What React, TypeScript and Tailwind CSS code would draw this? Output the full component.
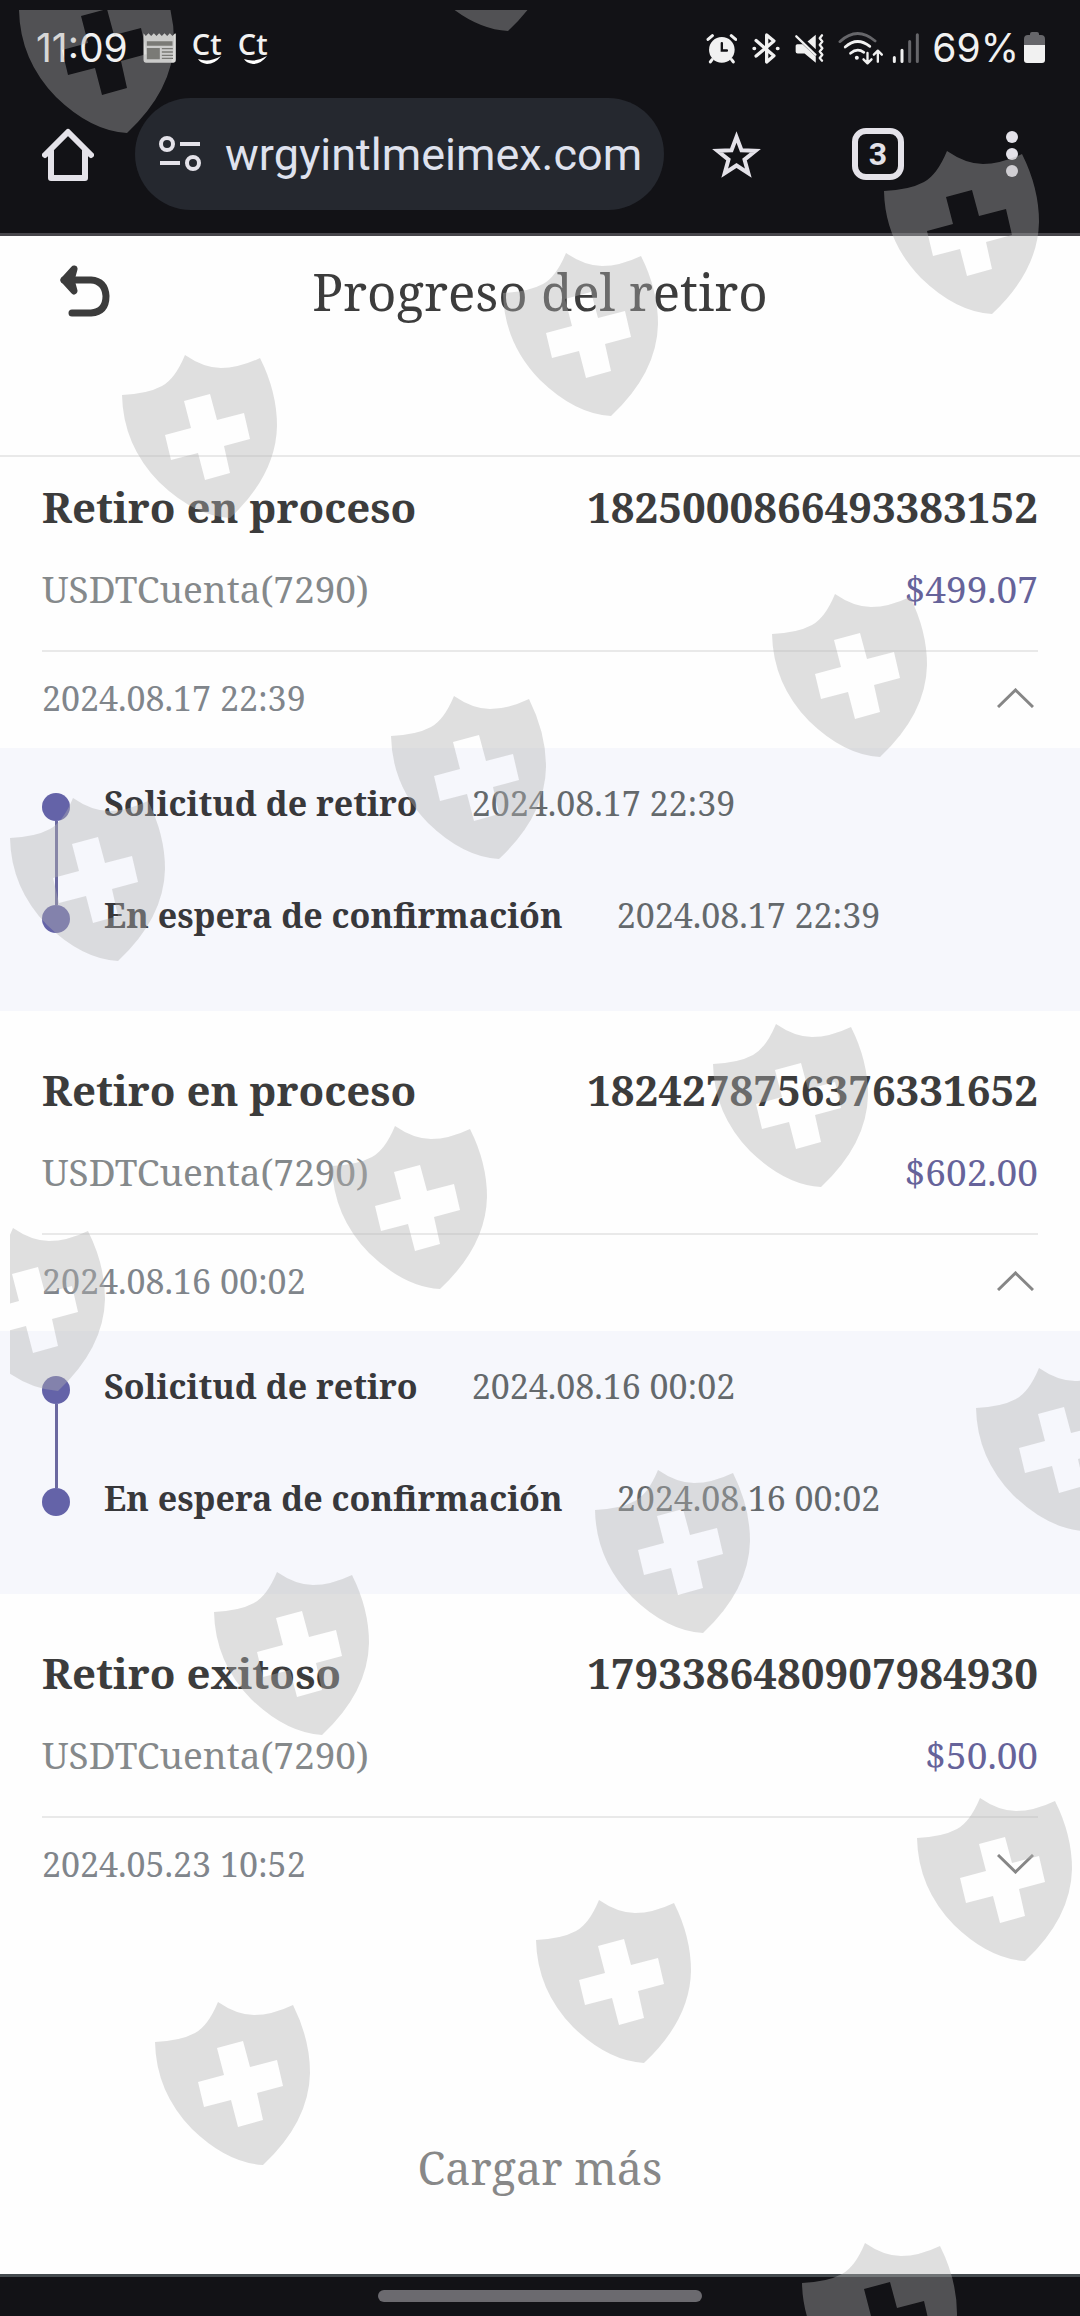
import { useState } from "react";

type Step = { label: string; time: string };
type Withdrawal = {
  status: string;
  id: string;
  account: string;
  amount: string;
  date: string;
  steps: Step[];
};

const WITHDRAWALS: Withdrawal[] = [
  {
    status: "Retiro en proceso",
    id: "1825000866493383152",
    account: "USDTCuenta(7290)",
    amount: "$499.07",
    date: "2024.08.17 22:39",
    steps: [
      { label: "Solicitud de retiro", time: "2024.08.17 22:39" },
      { label: "En espera de confirmación", time: "2024.08.17 22:39" },
    ],
  },
  {
    status: "Retiro en proceso",
    id: "1824278756376331652",
    account: "USDTCuenta(7290)",
    amount: "$602.00",
    date: "2024.08.16 00:02",
    steps: [
      { label: "Solicitud de retiro", time: "2024.08.16 00:02" },
      { label: "En espera de confirmación", time: "2024.08.16 00:02" },
    ],
  },
  {
    status: "Retiro exitoso",
    id: "1793386480907984930",
    account: "USDTCuenta(7290)",
    amount: "$50.00",
    date: "2024.05.23 10:52",
    steps: [],
  },
];

function NewsIcon() {
  return (
    <svg className="h-[30px] w-[33px]" viewBox="42 38 98 90" aria-hidden="true">
      <path
        fill="#dcdcda"
        d="M43 39l7 8 8-8 8 8 8-8 8 8 8-8 8 8 8-8 8 8 8-8 8 8 8-8 2 2v79q0 7-7 7H50q-7 0-7-7z"
      />
      <path fill="#55554f" d="M53 63h77v13H53zM53 83h39v34H53zM98 83h33v4H98zM98 93h33v4H98zM98 103h33v4H98zM98 112h33v4H98z" />
    </svg>
  );
}

function CtIcon() {
  return (
    <span className="flex w-[30px] flex-col items-center">
      <span className="font-['Open_Sans'] text-[29px] leading-6 font-semibold">Ct</span>
      <svg className="ml-1 h-2 w-[24px]" viewBox="0 0 24 8" aria-hidden="true">
        <path fill="#fff" d="M1 3Q12 7 24 0Q18 8 10 8Q3 7 1 3Z" />
      </svg>
    </span>
  );
}

function StatusBar() {
  return (
    <div className="flex h-17 items-start pt-7 pr-[35px] pl-[36px] font-['Inter'] text-[#f1f1f1]">
      <div className="flex h-10 items-center">
        <span className="text-[39px] leading-10">11:09</span>
        <span className="ml-[15px]">
          <NewsIcon />
        </span>
        <span className="ml-4">
          <CtIcon />
        </span>
        <span className="ml-4">
          <CtIcon />
        </span>
      </div>
      <div className="ml-auto flex h-10 items-center">
        <svg className="h-[31px] w-[31px]" viewBox="48 38 92 92" stroke="#f1f1f1" strokeWidth="9" strokeLinecap="round" fill="none" aria-label="Alarma">
          <circle cx="95" cy="88" r="38" fill="#f1f1f1" stroke="none" />
          <path d="M54 57L67 46M136 57L123 46M66 117L61 124M124 117L129 124" />
          <path d="M95 68V90H110" stroke="#121216" strokeWidth="7" />
        </svg>
        <svg className="ml-[15px] h-[31px] w-[28px]" viewBox="184 37 84 94" stroke="#f1f1f1" strokeWidth="10" strokeLinecap="round" strokeLinejoin="round" fill="none" aria-label="Bluetooth">
          <path d="M196 60L250 106L228 125V43L250 61L196 107" />
          <path d="M190 84h1M261 84h1" strokeWidth="11" />
        </svg>
        <svg className="ml-[14px] h-[31px] w-[31px]" viewBox="310 37 92 94" fill="#f1f1f1" aria-label="Vibración">
          <path d="M314 76q0-5 5-5h16L375 108V127L341 99H320q-6 0-6-6z" />
          <path d="M350 63L375 42V86Z" />
          <path d="M316 47L374 103M394 44l-7 9 8 10-8 10 8 10-8 10 8 10-8 10 7 8" fill="none" stroke="#f1f1f1" strokeWidth="7" strokeLinecap="round" strokeLinejoin="round" />
        </svg>
        <svg className="ml-3 h-[34px] w-[47px]" viewBox="440 30 140 102" fill="none" stroke="#f1f1f1" strokeWidth="8" strokeLinecap="round" strokeLinejoin="round" aria-label="Wi-Fi">
          <path d="M448 62Q500 14 554 60" stroke="#66666a" />
          <path d="M464 78Q500 46 538 76M480 97Q500 80 520 94" />
          <circle cx="499" cy="110" r="6" fill="#f1f1f1" stroke="none" />
          <path d="M531 96V126M519 115L531 127L543 115M562 122V90M550 101L562 89L574 101" strokeWidth="7" />
        </svg>
        <svg className="ml-2 h-[31px] w-[28px]" viewBox="605 37 84 92" strokeWidth="9" strokeLinecap="round" aria-label="Señal">
          <path d="M612 110V122M635 88V122" stroke="#f1f1f1" />
          <path d="M658 62V122M681 42V122" stroke="#66666a" />
        </svg>
        <span className="ml-3 text-[39px] leading-10">69%</span>
        <svg className="ml-[5px] h-8 w-[21px]" viewBox="0 0 21 32" aria-label="Batería">
          <path fill="#66666a" d="M6 3V2q0-2 2-2h5q2 0 2 2v1h2q4 0 4 4v6H0V7q0-4 4-4z" />
          <path fill="#f1f1f1" d="M0 13h21v15q0 3-3 3H3q-3 0-3-3z" />
        </svg>
      </div>
    </div>
  );
}

function BrowserBar() {
  return (
    <div className="flex items-center pt-[30px] pr-[62px] pb-[23px] pl-[42px] text-[#e4e2e9]">
      <button type="button" aria-label="Inicio">
        <svg className="h-[53px] w-[52px]" viewBox="0 0 52 53" fill="none" stroke="currentColor" strokeWidth="6" strokeLinejoin="round" strokeLinecap="round" aria-hidden="true">
          <path d="M3 27L26 4L49 27" />
          <path d="M9 23V50H43V23" />
        </svg>
      </button>
      <div className="ml-[41px] flex h-28 min-w-0 flex-1 items-center gap-6 rounded-full bg-[#25282f] pr-5 pl-6">
        <svg className="h-[38px] w-[42px] shrink-0" viewBox="0 0 42 38" fill="none" stroke="currentColor" strokeWidth="4" aria-hidden="true">
          <circle cx="8" cy="9" r="6" />
          <circle cx="34" cy="28" r="6" />
          <path d="M21 9H41M1 28H21" />
        </svg>
        <input
          aria-label="Dirección"
          className="w-full min-w-0 bg-transparent pt-0.5 font-['Roboto'] text-[45px] text-[#dfe2ee] outline-none"
          defaultValue="wrgyintlmeimex.com"
        />
      </div>
      <button type="button" aria-label="Favorito" className="ml-12">
        <svg className="h-[49px] w-[49px]" viewBox="0 0 49 49" fill="none" stroke="currentColor" strokeWidth="4" aria-hidden="true">
          <path d="M24.500 7L29.500 20.200L43.500 20.800L32.500 29.600L36.300 43.200L24.500 35.500L12.700 43.200L16.500 29.600L5.500 20.800L19.500 20.200Z" />
        </svg>
      </button>
      <button type="button" aria-label="3 pestañas" className="ml-[91px] flex h-13 w-13 items-center justify-center rounded-[14px] border-[6px] border-current font-['Roboto'] text-[32px] leading-none font-bold">
        3
      </button>
      <button type="button" aria-label="Más opciones" className="ml-[102px] flex flex-col gap-[5px]">
        <span className="size-3 rounded-full bg-current" />
        <span className="size-3 rounded-full bg-current" />
        <span className="size-3 rounded-full bg-current" />
      </button>
    </div>
  );
}

function WithdrawalItem({ item }: { item: Withdrawal }) {
  const [open, setOpen] = useState(item.steps.length > 0);
  return (
    <article className="mb-[29px]">
      <div className="mx-[42px] border-b-2 border-[#e9e9e9] pt-[22px] pb-[37px]">
        <div className="flex justify-between text-[42px] leading-[56px] font-bold text-[#3c3c3c]">
          <h2>{item.status}</h2>
          <span>{item.id}</span>
        </div>
        <div className="mt-[30px] flex justify-between text-[37px] leading-[48px]">
          <span className="text-[#85898b]">{item.account}</span>
          <span className="text-[#66639a]">{item.amount}</span>
        </div>
      </div>
      <button
        type="button"
        aria-expanded={open}
        onClick={() => setOpen(!open)}
        className="mb-1 flex h-[92px] w-full items-center justify-between pr-[46px] pl-[42px] text-[34px] text-[#80858b]"
      >
        {item.date}
        <svg className="h-5 w-[37px]" viewBox="0 0 37 20" fill="none" stroke="#868686" strokeWidth="3" aria-hidden="true">
          <path d={open ? "M1 19L18.500 2L36 19" : "M1 1L18.500 18L36 1"} />
        </svg>
      </button>
      {open && item.steps.length > 0 && (
        <ol className="bg-[#f6f7fc] px-[42px] pt-[45px] pb-[78px] text-[34px] leading-5">
          {item.steps.map((step) => (
            <li key={step.label} className="group flex h-28 last:h-7">
              <span className="flex w-7 flex-col items-center">
                <span className="size-7 shrink-0 rounded-full bg-[#6463a8]" />
                <span className="w-[3px] flex-1 bg-[#6b69a0] group-last:hidden" />
              </span>
              <span className="ml-[34px] font-bold text-[#38383b]">{step.label}</span>
              <time className="ml-[54px] text-[#64696c]">{step.time}</time>
            </li>
          ))}
        </ol>
      )}
    </article>
  );
}

/* Tiled shield stamps laid over the whole screen. */
const SHIELDS: [number, number][] = [
  [19, -31], [400, -133],
  [122, 354], [503, 252], [884, 150],
  [10, 797], [391, 695], [772, 593],
  [-50, 1227], [332, 1125], [713, 1023],
  [214, 1571], [595, 1469], [976, 1367],
  [155, 2001], [536, 1899], [917, 1797],
  [802, 2242],
];

function ShieldOverlay() {
  return (
    <div className="pointer-events-none absolute top-2.5 right-0 bottom-0 left-2.5 overflow-hidden" aria-hidden="true">
      <svg className="size-full">
        <defs>
          <path
            id="shield"
            fillRule="evenodd"
            d="M0 40Q25 39 40 31Q53 24 63 0Q82 13 99 13Q117 13 138 3Q155 37 155 71Q154 120 108 163Q72 161 37 127Q1 90 0 40ZM62 46L69 73L43 80L49 105L76 98L83 125L108 118L102 91L128 84L122 58L95 65L88 39Z"
          />
        </defs>
        <g fill="#b2b2b2" fillOpacity="0.4" transform="translate(-10 -9)">
          {SHIELDS.map(([x, y]) => (
            <use key={`${x}:${y}`} href="#shield" x={x} y={y} />
          ))}
        </g>
      </svg>
    </div>
  );
}

export default function App() {
  return (
    <div className="relative flex min-h-screen flex-col bg-[#fefefe] font-['Noto_Serif',serif]">
      <header className="border-b-[3px] border-[#47464b] bg-[#121216]">
        <StatusBar />
        <BrowserBar />
      </header>

      <main className="flex-1">
        <div className="border-b-2 border-[#e9e9e9] px-[60px] pt-[15px] pb-[124px]">
          <div className="grid h-20 grid-cols-[1fr_auto_1fr] items-center">
            <button type="button" aria-label="Volver" className="justify-self-start">
              <svg className="h-[52px] w-[51px]" viewBox="1 0 51 52" fill="none" stroke="#3c3c3c" strokeWidth="7" strokeLinecap="round" strokeLinejoin="round" aria-hidden="true">
                <path d="M13 48H32Q47 47 47 31Q46 16 32 15H5" />
                <path d="M15 4L5 15L15 26L12 15Z" />
              </svg>
            </button>
            <h1 className="text-[51px] leading-[80px] text-[#3c3c3c]">Progreso del retiro</h1>
          </div>
        </div>

        {WITHDRAWALS.map((item) => (
          <WithdrawalItem key={item.id} item={item} />
        ))}

        <div className="flex justify-center pt-[199px] pb-[72px]">
          <button type="button" className="text-[45px] leading-[60px] text-[#888888]">
            Cargar más
          </button>
        </div>
      </main>

      <footer className="flex justify-center border-t-[3px] border-[#454b4f] bg-[#121216] pt-[13px] pb-[14px]">
        <span className="h-3 w-[30%] rounded-full bg-[#6b6a6f]" />
      </footer>

      <ShieldOverlay />
    </div>
  );
}
